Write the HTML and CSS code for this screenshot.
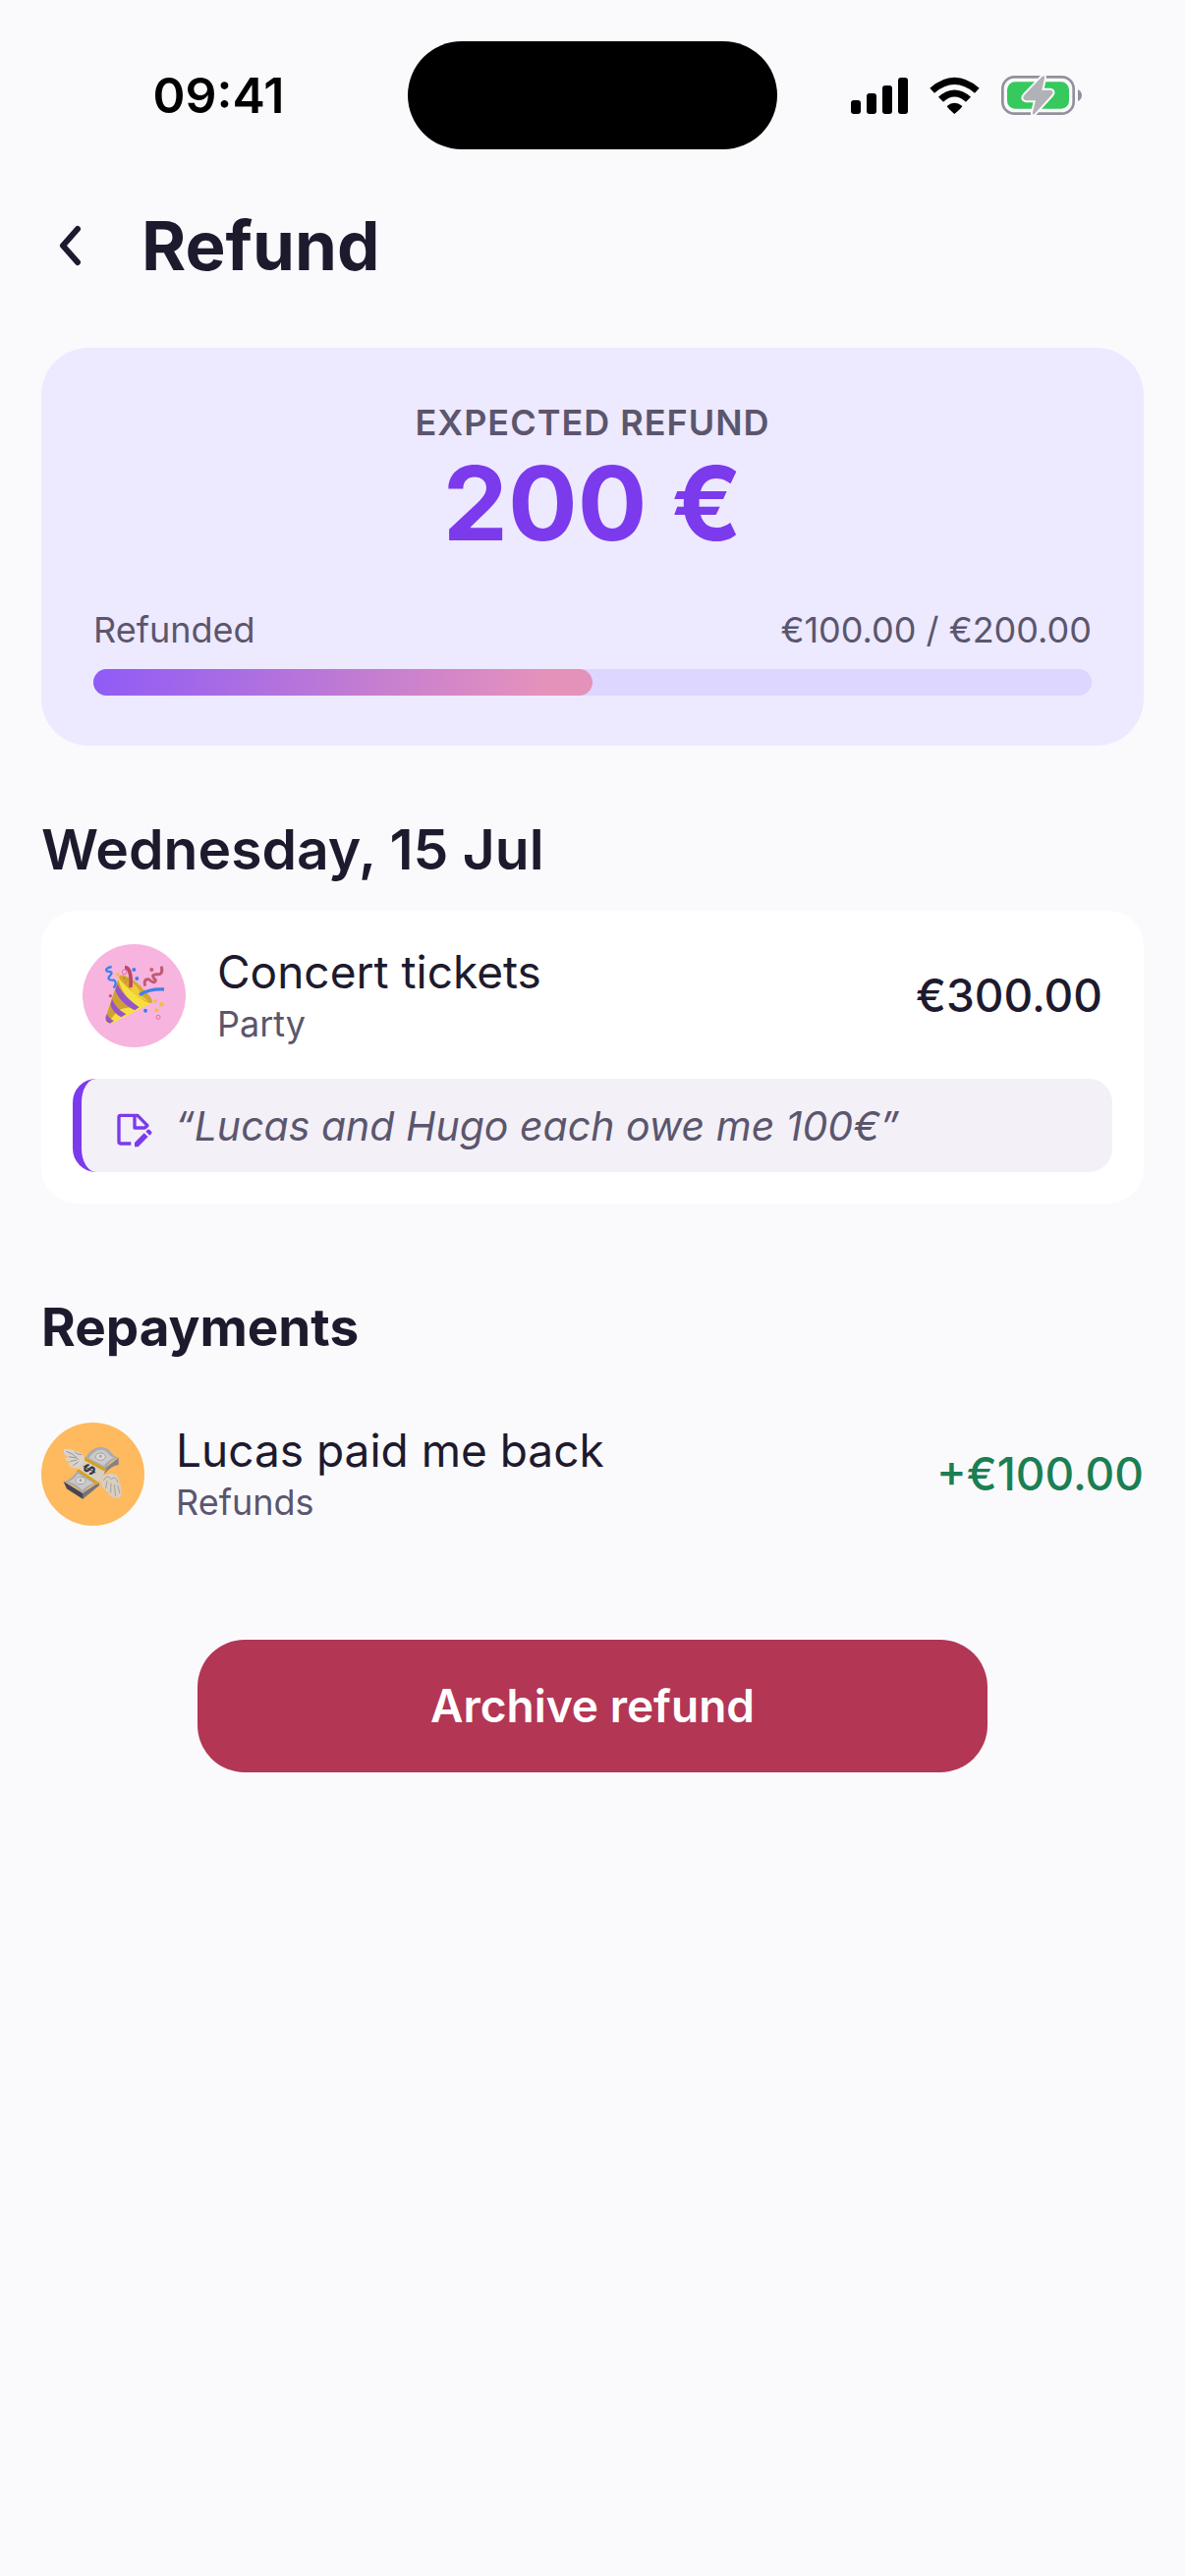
FILE: index.html
```html
<!DOCTYPE html>
<html lang="en">
<head>
<meta charset="utf-8">
<meta name="viewport" content="width=device-width, initial-scale=1">
<title>Refund</title>
<link rel="stylesheet" href="styles.css">
</head>
<body>
<div class="status">
  <time class="status-time">09:41</time>
  <div class="island"></div>
  <div class="status-icons">
    <svg width="58" height="38" viewBox="0 0 58 38" aria-hidden="true">
      <rect x="0" y="24" width="10" height="14" rx="3"/><rect x="16" y="17" width="10" height="21" rx="3"/><rect x="32" y="9" width="10" height="29" rx="3"/><rect x="48" y="1" width="10" height="37" rx="3"/>
    </svg>
    <svg width="51" height="38" viewBox="0 0 153 114" aria-hidden="true">
      <path d="M1 35 Q76 -30 152 35 L138 50 Q76 -2 15 50Z"/>
      <path d="M27 62 Q76 19 126 62 L111 77 Q76 46 42 77Z"/>
      <path d="M53 90 Q76 70 100 90 Q98 96 76 114 Q55 96 53 90Z"/>
    </svg>
    <svg width="82" height="40" viewBox="0 0 246 120" aria-hidden="true">
      <rect x="4" y="4" width="217" height="112" rx="36" fill="none" stroke="#92919b" stroke-width="8"/>
      <path d="M234 42 Q246 48 246 60 Q246 72 234 78Z" fill="#92919b"/>
      <rect x="18" y="19" width="189" height="82" rx="24" fill="#36c95d"/>
      <path d="M124 4 Q133 -4 132 8 L124 44 H150 Q162 46 155 58 L104 114 Q94 124 96 112 L105 76 H76 Q60 72 72 58Z" fill="#b1b1b8" stroke="#fafafd" stroke-width="12" stroke-linejoin="round"/>
      <path d="M124 4 Q133 -4 132 8 L124 44 H150 Q162 46 155 58 L104 114 Q94 124 96 112 L105 76 H76 Q60 72 72 58Z" fill="#b1b1b8"/>
    </svg>
  </div>
</div>

<main class="screen">
  <header class="header">
    <button class="back" type="button" aria-label="Back">
      <svg width="24" height="42" viewBox="0 0 24 42" fill="none" stroke="currentColor" stroke-width="6" stroke-linecap="round" stroke-linejoin="round"><path d="M19 4 L4 21 L19 38"/></svg>
    </button>
    <h1 class="title">Refund</h1>
  </header>

  <section class="summary">
    <h2 class="summary-label">EXPECTED REFUND</h2>
    <p class="summary-amount">200 €</p>
    <div class="progress-text"><span id="refunded">Refunded</span><span>€100.00 / €200.00</span></div>
    <div class="track" role="progressbar" aria-labelledby="refunded" aria-valuemin="0" aria-valuemax="200" aria-valuenow="100"><div class="fill" style="width:50%"></div></div>
  </section>

  <h2 class="date">Wednesday, 15 Jul</h2>
  <section class="card">
    <div class="row">
      <span class="avatar avatar-party">
        <svg width="60" height="60" viewBox="0 0 180 180" aria-hidden="true">
          <path d="M2 156 L40 42 Q44 24 62 32 Q96 44 120 76 Q150 104 142 114 L20 176 Q-2 182 2 156Z" fill="#f7df3f"/>
          <path d="M2 156 L40 42 Q50 84 92 124 L60 130 Q40 128 12 172 Q-1 172 2 156Z" fill="#d0a033"/>
          <path d="M42 34 Q48 24 66 33 Q100 48 122 78 Q150 104 142 114 Q124 116 84 80 Q42 44 42 34Z" fill="#d6a632"/>
          <path d="M72 48 Q100 56 110 90 L134 110 Q108 104 82 80Z" fill="#f0cc3b"/>
          <path d="M37 55 Q50 88 104 127 L90 136 Q44 112 31 76Z M21 102 Q34 132 64 148 L49 157 Q26 146 16 120Z M6 146 Q10 160 27 168 L15 176 Q0 174 2 156Z" fill="#9455c8"/>
          <path d="M60 5 Q82 6 78 66" fill="none" stroke="#b94a64" stroke-width="11"/>
          <path d="M105 89 Q136 70 180 72" fill="none" stroke="#3c80ea" stroke-width="10"/>
          <path d="M20 3 Q-3 8 6 17 Q28 17 14 31 Q3 45 27 44 Q38 52 26 68" fill="none" stroke="#3c80ea" stroke-width="7"/>
          <path d="M122 62 Q116 38 134 42 Q151 57 154 44 Q136 26 158 26 Q178 29 172 2" fill="none" stroke="#c15a74" stroke-width="9"/>
          <g fill="#3c80ea"><circle cx="88" cy="12" r="6"/><circle cx="97" cy="39" r="6"/><circle cx="123" cy="137" r="6"/></g>
          <g fill="#f5bd40"><circle cx="39" cy="27" r="6"/><circle cx="153" cy="108" r="5"/><circle cx="172" cy="118" r="7"/><circle cx="157" cy="136" r="6"/></g>
          <g fill="#cb5a70"><circle cx="142" cy="12" r="6"/><circle cx="16" cy="92" r="5"/></g>
          <g fill="none" stroke="#e86ba0" stroke-width="3"><circle cx="59" cy="19" r="7"/><circle cx="162" cy="157" r="6"/></g>
          <g fill="#ad7c24"><circle cx="58" cy="38" r="3"/><circle cx="67" cy="43" r="2"/><circle cx="62" cy="50" r="2"/></g>
        </svg>
      </span>
      <div class="info"><h3 class="name">Concert tickets</h3><p class="category">Party</p></div>
      <span class="amount">€300.00</span>
    </div>
    <div class="note">
      <svg class="note-icon" width="42" height="42" viewBox="-10 -26 126 126" fill="none" stroke="currentColor" stroke-width="10" aria-hidden="true">
        <path d="M42 91 H10 Q5 91 5 86 V10 Q5 5 10 5 H62 L92 36 L84 43 H53 V5" stroke-linejoin="round"/>
        <path d="M53 101 V88 L82 59 L94 70 L64 101Z M87 54 L93 48 Q96 46 99 49 L105 55 Q107 58 104 61 L99 66Z" fill="currentColor" stroke="none"/>
      </svg>
      <p class="note-text">“Lucas and Hugo each owe me 100€”</p>
    </div>
  </section>

  <h2 class="section-title">Repayments</h2>
  <div class="row">
    <span class="avatar avatar-refund">
      <svg width="60" height="60" viewBox="0 0 180 180" aria-hidden="true">
        <path d="M-1 114 L57 149 L108 116 V126 L58 167 Q28 150 8 136Z" fill="#73747f"/>
        <path d="M-1 114 L57 150 L58 167 L10 136Z" fill="#454650"/>
        <path d="M125 74 L167 41 V63 Q146 64 124 92Z" fill="#81828d"/>
        <path d="M65 44 Q82 14 104 10 Q126 6 140 20 Q150 36 167 41 Q145 46 125 76Z" fill="#a9aab0"/>
        <path d="M76 43 Q90 20 108 17 Q122 15 131 24 Q141 37 153 41 Q136 48 122 66Z" fill="#cbc9c8"/>
        <path d="M42 79 L104 119 Q76 126 57 150 Q40 128 -1 114 Q24 110 42 79Z" fill="#a9aab0"/>
        <path d="M43 89 L91 119 Q70 126 56 140 Q40 122 14 113 Q32 108 43 89Z" fill="#cbc9c8"/>
        <g fill="#dedbd7" stroke="#898a91" stroke-width="2"><ellipse cx="112" cy="38" rx="15" ry="11"/><ellipse cx="51" cy="111" rx="15" ry="11"/></g>
        <g fill="none" stroke="#8b8b93" stroke-width="3"><circle cx="112" cy="37" r="3"/><circle cx="51" cy="110" r="3"/></g>
        <path d="M64 40 L128 78 L104 121 L42 79Z" fill="#d8cec0"/>
        <path d="M64 39 L132 78 L125 83 L59 47Z M45 76 L108 118 L103 124 L40 82Z" fill="#d8a119"/>
        <text class="banknote-sign" text-anchor="middle" dominant-baseline="central" transform="translate(78 77) rotate(-60)">$</text>
        <path d="M0 15 Q20 12 36 21 Q56 22 64 45 L46 73 Q27 76 15 65 Q13 56 20 53 Q1 51 4 43 L15 39 Q-5 33 0 15Z" fill="#d9d3cb"/>
        <path d="M8 22 Q28 27 46 48 M15 38 L37 42 M20 53 L39 48 M28 65 L44 54 M33 23 Q38 31 54 32" fill="none" stroke="#969699" stroke-width="3"/>
        <path d="M109 108 Q118 88 145 90 Q163 87 168 109 Q180 141 174 160 Q166 169 161 161 Q150 168 147 158 Q135 158 136 147 Q126 146 126 137 Q114 133 115 122Z" fill="#d8cec2"/>
        <path d="M128 135 L132 112 M143 149 L144 119 M158 159 L154 123 M171 150 L164 125 M121 111 Q132 90 145 107 Q158 94 165 117" fill="none" stroke="#a7a19c" stroke-width="3"/>
      </svg>
    </span>
    <div class="info"><h3 class="name">Lucas paid me back</h3><p class="category">Refunds</p></div>
    <span class="amount amount-positive">+€100.00</span>
  </div>

  <button class="archive" type="button">Archive refund</button>
</main>
</body>
</html>
```
FILE: styles.css
```css
* {
  box-sizing: border-box;
}

body {
  margin: 0;
  background: #fafafd;
  color: #1e1a2e;
  font-family: Inter, "Liberation Sans", sans-serif;
}

h1, h2, h3, p {
  margin: 0;
}

button {
  border: 0;
  padding: 0;
  font-family: inherit;
}

svg {
  display: block;
  flex: none;
  overflow: visible;
}

.status {
  display: grid;
  grid-template-columns: 1fr 376px 1fr;
  align-items: center;
  padding: 42px 30px 0;
  color: #000;
}

.status-time {
  text-align: center;
  font-size: 50px;
  line-height: 60px;
  font-weight: 600;
}

.island {
  height: 110px;
  border-radius: 55px;
  background: #000;
}

.status-icons {
  display: flex;
  justify-content: center;
  align-items: center;
  gap: 22px;
}

.screen {
  padding: 56px 42px;
}

.header {
  display: flex;
  align-items: center;
  gap: 42px;
  margin-bottom: 62px;
}

.back {
  display: flex;
  align-items: center;
  justify-content: center;
  width: 60px;
  height: 84px;
  background: none;
  color: inherit;
}

.title {
  font-size: 69px;
  line-height: 84px;
  font-weight: 700;
}

.summary {
  padding: 54px 53px 51px;
  border-radius: 48px;
  background: #ede9fe;
  color: #5b566d;
}

.summary-label {
  text-align: center;
  font-size: 36px;
  line-height: 44px;
  font-weight: 600;
  letter-spacing: 1px;
}

.summary-amount {
  margin-bottom: 47px;
  text-align: center;
  color: #7c3aed;
  font-size: 105px;
  line-height: 120px;
  font-weight: 700;
}

.progress-text {
  display: flex;
  justify-content: space-between;
  margin-bottom: 18px;
  font-size: 36px;
  line-height: 44px;
}

.track {
  height: 27px;
  border-radius: 14px;
  background: #ddd6fe;
}

.fill {
  height: 100%;
  border-radius: 14px;
  background: linear-gradient(100deg, #8f5bf6, #e592bb 90%);
}

.date {
  margin: 70px 0 26px;
  font-size: 57px;
  line-height: 72px;
  font-weight: 600;
}

.card {
  padding: 33px 32px 32px;
  border-radius: 36px;
  background: #fff;
}

.card .row {
  margin-bottom: 32px;
  padding: 0 10px;
}

.row {
  display: flex;
  align-items: center;
  gap: 32px;
}

.avatar {
  display: flex;
  flex: none;
  align-items: center;
  justify-content: center;
  width: 105px;
  height: 105px;
  border-radius: 50%;
}

.avatar-party {
  background: #f7b4df;
}

.avatar-refund {
  background: #ffb95e;
}

.banknote-sign {
  fill: #343642;
  font-size: 46px;
  font-weight: 700;
}

.info {
  flex: 1;
}

.name {
  font-size: 46px;
  line-height: 58px;
  font-weight: 400;
}

.category {
  color: #5b566d;
  font-size: 36px;
  line-height: 48px;
}

.amount {
  font-size: 46px;
  line-height: 58px;
  font-weight: 500;
}

.amount-positive {
  color: #1a7f54;
}

.note {
  display: flex;
  align-items: center;
  gap: 20px;
  padding: 21px 32px 20px 33px;
  border-left: 9px solid #7c3aed;
  border-radius: 24px;
  background: #f3f0f8;
}

.note-icon {
  color: #7c3aed;
}

.note-text {
  color: #5b566d;
  font-size: 41px;
  line-height: 54px;
  font-style: italic;
}

.section-title {
  margin: 94px 0 64px;
  font-size: 53px;
  line-height: 64px;
  font-weight: 700;
}

.archive {
  display: block;
  width: calc(100% - 318px);
  margin: 116px auto 0;
  padding: 38px 24px 39px;
  border-radius: 48px;
  background: #b33654;
  color: #fff;
  font-size: 46px;
  line-height: 58px;
  font-weight: 600;
}
```
